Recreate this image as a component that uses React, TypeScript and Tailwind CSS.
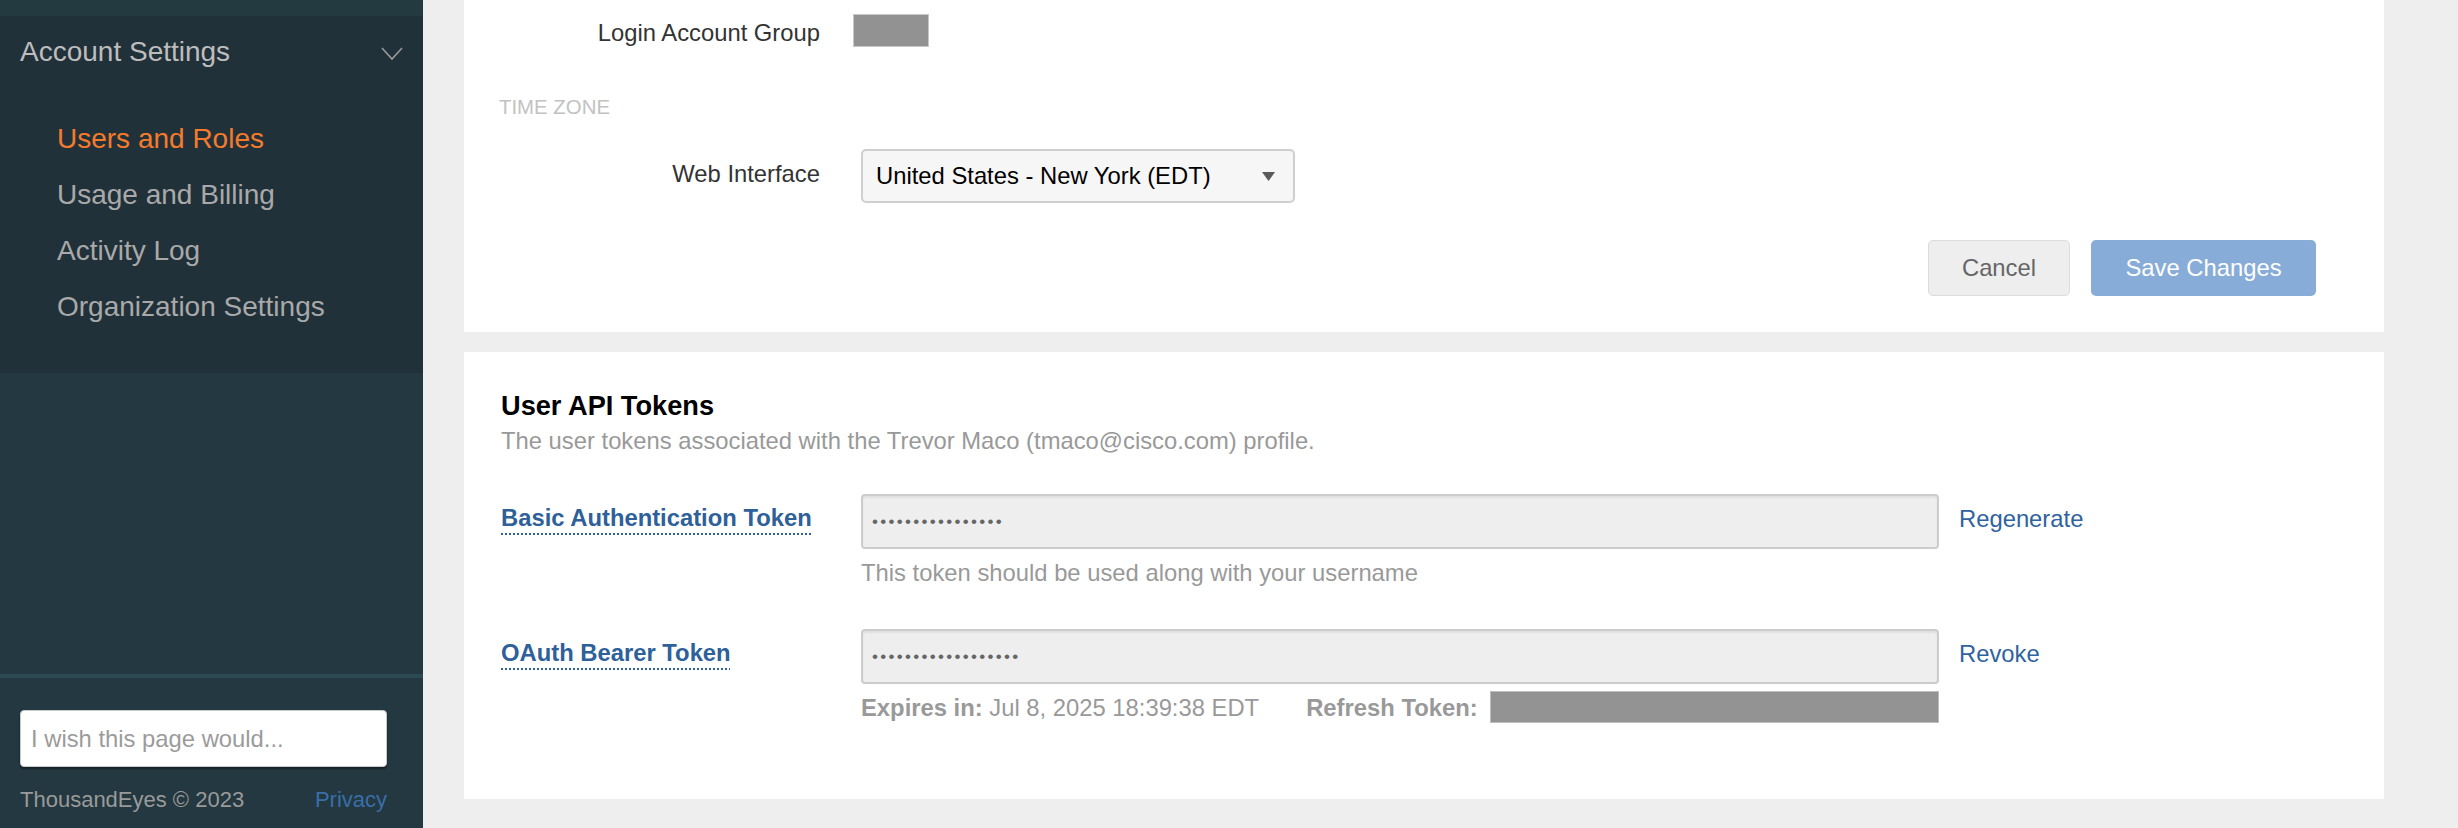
import React from "react";

const font = { fontFamily: '"Liberation Sans", Arial, Helvetica, sans-serif' };

function Sidebar() {
  const items = ["Users and Roles", "Usage and Billing", "Activity Log", "Organization Settings"];
  return (
    <aside className="w-[423px] h-full shrink-0 flex flex-col bg-[#233840]">
      <div className="h-[16px] bg-[#243a41]" />
      <div className="bg-[#21313a] pt-[19px] pb-[38px]">
        <div className="flex items-center justify-between pl-[20px] pr-[20px] h-[34px]">
          <span className="text-[28px] leading-[34px] text-[#bdbdbd]">Account Settings</span>
          <svg width="22" height="14" viewBox="0 0 22 14" className="mt-[3px]">
            <path d="M1 1 L11 12 L21 1" fill="none" stroke="#9a9a9a" strokeWidth="1.6" />
          </svg>
        </div>
        <ul className="mt-[42px] pl-[57px]">
          {items.map((it, i) => (
            <li
              key={it}
              className={`text-[28px] leading-[56px] ${i === 0 ? "text-[#f47b2c]" : "text-[#a9a9a9]"}`}
            >
              {it}
            </li>
          ))}
        </ul>
      </div>
      <div className="flex-1" />
      <div className="h-[4px] bg-[#2c4a52]" />
      <div className="pl-[20px] pr-[36px] pt-[32px] pb-[15px]">
        <div className="h-[57px] bg-white rounded-[4px] border border-[#c9c9c9] shadow-[0_2px_2px_rgba(0,0,0,0.4)] flex items-center pl-[10px]">
          <span className="text-[23.8px] text-[#9b9b9b]">I wish this page would...</span>
        </div>
        <div className="mt-[20px] flex justify-between text-[22px] leading-[26px]">
          <span className="text-[#9a9a9a]">ThousandEyes © 2023</span>
          <span className="text-[#3a6ea8]">Privacy</span>
        </div>
      </div>
    </aside>
  );
}

function Dots({ n }: { n: number }) {
  return (
    <span className="text-[17px] tracking-[2.3px] text-[#666666]">{"•".repeat(n)}</span>
  );
}

export default function App() {
  return (
    <div className="flex w-[2458px] h-[828px] overflow-hidden bg-[#eeeeee]" style={font}>
      <Sidebar />
      <main className="flex-1 pl-[41px]">
        {/* Card 1 */}
        <section className="w-[1920px] bg-white pl-[35px] pr-[68px] pt-[14px] pb-[36px]">
          <div className="flex items-start">
            <div className="w-[321px] text-right text-[23.8px] leading-[28px] text-[#333333] mt-[5px]">
              Login Account Group
            </div>
            <div className="ml-[33px] w-[76px] h-[33px] bg-[#929292] border border-[#c8c8c8]" />
          </div>
          <div className="mt-[48px] text-[20.4px] leading-[24px] text-[#c2c2c2] uppercase">Time Zone</div>
          <div className="mt-[30px] flex items-start">
            <div className="w-[321px] text-right text-[23.8px] leading-[28px] text-[#333333] mt-[11px]">
              Web Interface
            </div>
            <div className="ml-[41px] w-[434px] h-[54px] bg-[#f6f6f6] border-2 border-[#cfcfcf] rounded-[5px] flex items-center justify-between pl-[13px] pr-[18px]">
              <span className="text-[23.8px] text-black">United States - New York (EDT)</span>
              <svg width="13" height="9" viewBox="0 0 13 9">
                <path d="M0 0 H13 L6.5 9 Z" fill="#5a5a5a" />
              </svg>
            </div>
          </div>
          <div className="mt-[37px] flex justify-end gap-[21px]">
            <button className="w-[142px] h-[56px] bg-[#eeeeee] border border-[#dcdcdc] rounded-[5px] text-[23.8px] text-[#666666]">
              Cancel
            </button>
            <button className="w-[225px] h-[56px] bg-[#88acd8] rounded-[5px] text-[23.8px] text-white">
              Save Changes
            </button>
          </div>
        </section>

        {/* Card 2 */}
        <section className="mt-[20px] w-[1920px] bg-white pl-[37px] pt-[38px] pb-[76px]">
          <h2 className="text-[27.2px] leading-[32px] font-bold text-black">User API Tokens</h2>
          <p className="mt-[5px] text-[23.8px] leading-[28px] text-[#999999]">
            The user tokens associated with the Trevor Maco (tmaco@cisco.com) profile.
          </p>

          <div className="mt-[39px] flex items-start">
            <div className="w-[360px] mt-[10px]">
              <span className="text-[23.8px] leading-[28px] font-bold text-[#2e6099] underline decoration-dotted decoration-2 underline-offset-[7px]">
                Basic Authentication Token
              </span>
            </div>
            <div className="w-[1078px] h-[55px] bg-[#eeeeee] border-2 border-[#cccccc] rounded-[4px] shadow-[inset_0_2px_2px_rgba(0,0,0,0.06)] flex items-center pl-[9px]">
              <Dots n={16} />
            </div>
            <span className="ml-[20px] mt-[11px] text-[23.8px] leading-[28px] text-[#2f62a0]">Regenerate</span>
          </div>
          <p className="ml-[360px] mt-[10px] text-[23.8px] leading-[28px] text-[#999999]">
            This token should be used along with your username
          </p>

          <div className="mt-[42px] flex items-start">
            <div className="w-[360px] mt-[10px]">
              <span className="text-[23.8px] leading-[28px] font-bold text-[#2e6099] underline decoration-dotted decoration-2 underline-offset-[7px]">
                OAuth Bearer Token
              </span>
            </div>
            <div className="w-[1078px] h-[55px] bg-[#eeeeee] border-2 border-[#cccccc] rounded-[4px] shadow-[inset_0_2px_2px_rgba(0,0,0,0.06)] flex items-center pl-[9px]">
              <Dots n={18} />
            </div>
            <span className="ml-[20px] mt-[11px] text-[23.8px] leading-[28px] text-[#2f62a0]">Revoke</span>
          </div>

          <div className="mt-[7px] ml-[360px] w-[1078px] flex items-start">
            <span className="mt-[3px] text-[23.8px] leading-[28px] text-[#999999]">
              <b className="font-bold">Expires in:</b> Jul 8, 2025 18:39:38 EDT
            </span>
            <span className="ml-[47px] mt-[3px] text-[23.8px] leading-[28px] font-bold text-[#999999]">
              Refresh Token:
            </span>
            <div className="ml-[12px] flex-1 h-[32px] bg-[#939393] border border-[#bdbdbd]" />
          </div>
        </section>
      </main>
    </div>
  );
}
